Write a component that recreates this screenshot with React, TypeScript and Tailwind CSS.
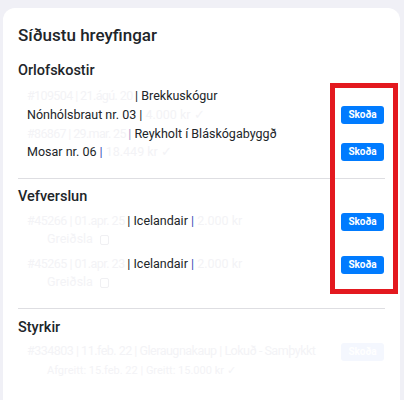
import React from 'react';

const faint = 'text-[#f3f3f6]';
const dark = 'text-[#212529]';
const pipe = 'text-[#3d4fb8]';

function SkodaButton({ muted }: { muted?: boolean }) {
  return (
    <button
      className={
        'w-[43px] h-[18px] rounded-[3px] text-[10px] font-bold leading-none text-white shrink-0 ' +
        (muted ? 'bg-[#f4f7fe]' : 'bg-[#007bff]')
      }
    >
      Skoða
    </button>
  );
}

function Box() {
  return <span className="inline-block w-[9px] h-[10px] border border-[#f0f0f3] rounded-[2px] align-middle ml-1" />;
}

export default function App() {
  return (
    <div
      className="relative h-[400px] overflow-hidden bg-[#f0f0f6] pt-2 pl-[3px] pr-1"
      style={{ fontFamily: 'Roboto, "Noto Sans", sans-serif' }}
    >
      <div className="h-[400px] rounded-t-xl bg-white px-[15px] pt-[13px]">
        <h2 className={'text-[17px] leading-[28px] font-medium ' + dark}>Síðustu hreyfingar</h2>

        {/* Orlofskostir */}
        <h3 className={'mt-[11px] text-[14.5px] leading-[22px] font-medium ' + dark}>Orlofskostir</h3>
        <div className="mt-[5px] pl-[9px] pr-[1px] text-[12.5px]">
          <div className="h-[18px] leading-[18px]">
            <span className={'tracking-[-0.6px] ' + faint}>#109504 | 21.ágú. 20 </span>
            <span className={dark}>| Brekkuskógur</span>
          </div>
          <div className="mt-[1px] h-[18px] flex items-center justify-between">
            <div>
              <span className={dark}>Nónhólsbraut nr. 03 |</span>
              <span className={faint}> 4.000 kr ✓</span>
            </div>
            <SkodaButton />
          </div>
          <div className="mt-[1px] h-[18px] leading-[18px]">
            <span className={'tracking-[-0.65px] ' + faint}>#86867 | 29.mar. 25 </span>
            <span className="text-[#a79ccc]">|</span>
            <span className={dark}> Reykholt í Bláskógabyggð</span>
          </div>
          <div className="h-[18px] flex items-center justify-between">
            <div>
              <span className={dark}>Mosar nr. 06 </span>
              <span className={pipe}>|</span>
              <span className={faint}> 18.449 kr ✓</span>
            </div>
            <SkodaButton />
          </div>
        </div>

        <hr className="mt-[17px] border-[#dedee2]" />

        {/* Vefverslun */}
        <h3 className={'mt-[7px] text-[14.5px] leading-[22px] font-medium ' + dark}>Vefverslun</h3>
        <div className="mt-[4px] pl-[9px] pr-[1px] text-[12.5px]">
          <div className="h-[19px] flex items-center justify-between">
            <div>
              <span className={'tracking-[-0.5px] ' + faint}>#45266 | 01.apr. 25 </span>
              <span className={dark}>| Icelandair </span>
              <span className={pipe}>|</span>
              <span className={faint}> 2.000 kr</span>
            </div>
            <SkodaButton />
          </div>
          <div className={'h-[16px] leading-[16px] pl-[20px] ' + faint}>
            Greiðsla <Box />
          </div>
          <div className="mt-[8px] h-[19px] flex items-center justify-between">
            <div>
              <span className={'tracking-[-0.5px] ' + faint}>#45265 | 01.apr. 23 </span>
              <span className={dark}>| Icelandair </span>
              <span className={pipe}>|</span>
              <span className={faint}> 2.000 kr</span>
            </div>
            <SkodaButton />
          </div>
          <div className={'h-[16px] leading-[16px] pl-[20px] ' + faint}>
            Greiðsla <Box />
          </div>
        </div>

        <hr className="mt-[18px] border-[#dedee2]" />

        {/* Styrkir */}
        <h3 className={'mt-[8px] text-[14.5px] leading-[22px] font-medium ' + dark}>Styrkir</h3>
        <div className="mt-[3px] pl-[9px] pr-[1px] text-[12.5px]">
          <div className="h-[19px] flex items-center justify-between">
            <div className={'whitespace-nowrap tracking-[-0.5px] ' + faint}>
              #334803 | 11.feb. 22 | Gleraugnakaup | Lokuð - Samþykkt
            </div>
            <SkodaButton muted />
          </div>
          <div className={'h-[19px] leading-[19px] pl-[20px] text-[11px] ' + faint}>Afgreitt: 15.feb. 22 | Greitt: 15.000 kr ✓</div>
        </div>
      </div>

      {/* highlight frame over the action column */}
      <div className="absolute left-[330px] top-[83px] w-[68px] h-[211px] border-[5px] border-[#e3191f]" />
    </div>
  );
}
